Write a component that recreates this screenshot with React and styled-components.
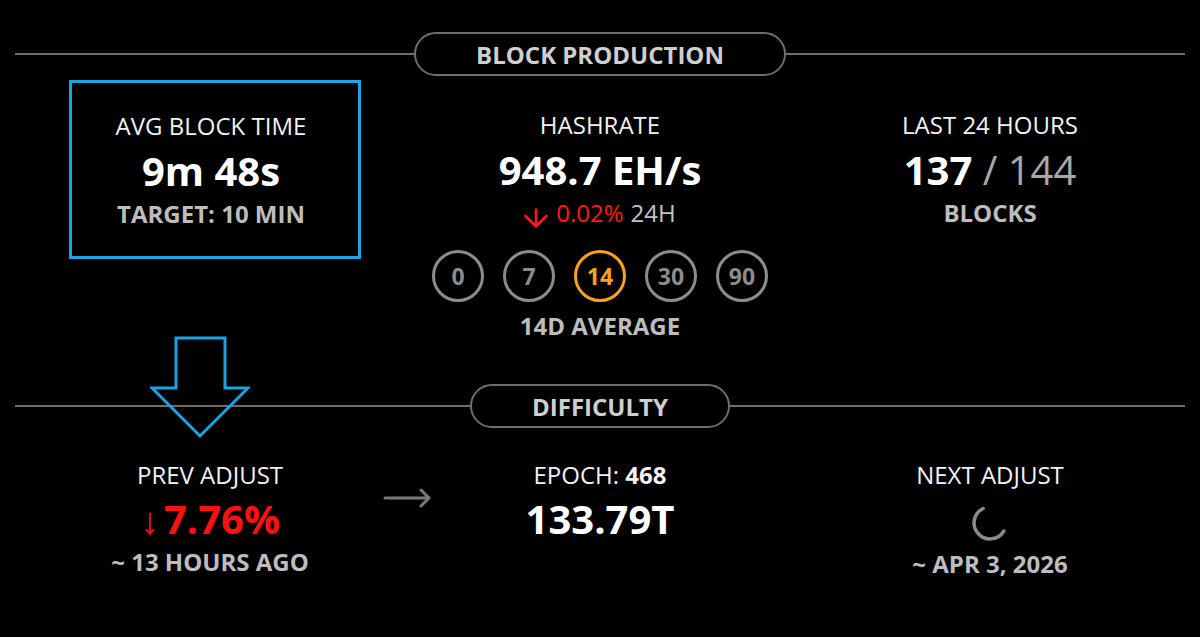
import React from 'react';
import styled, { createGlobalStyle } from 'styled-components';

const Global = createGlobalStyle`
  html, body {
    margin: 0;
    padding: 0;
    background: #000;
  }
  body {
    font-family: "Open Sans", "Noto Sans", sans-serif;
    color: #fff;
  }
`;

const Page = styled.div`
  position: relative;
  width: 1200px;
  height: 637px;
  box-sizing: border-box;
  padding: 32px 15px 0 15px;
  background: #000;
  overflow: hidden;
`;

const Header = styled.div`
  display: flex;
  align-items: center;
  height: 44px;
  margin-top: ${p => p.$top || 0}px;
`;

const Line = styled.div`
  flex: 1;
  height: 2px;
  background: #6e6e6e;
`;

const Pill = styled.div`
  height: 44px;
  box-sizing: border-box;
  display: flex;
  align-items: center;
  padding: 0 ${p => p.$pad}px;
  border: 2px solid #6e6e6e;
  border-radius: 22px;
  font-weight: 700;
  font-size: 24px;
  color: #cfcfcf;
`;

const Grid = styled.div`
  position: relative;
  display: grid;
  grid-template-columns: repeat(3, 1fr);
  align-items: start;
  margin-top: ${p => p.$top}px;
`;

const Col = styled.div`
  display: flex;
  flex-direction: column;
  align-items: center;
  padding-top: ${p => p.$pt || 0}px;
`;

const Highlight = styled.div`
  width: 292px;
  box-sizing: border-box;
  margin-left: 10px;
  padding: 28px 8px 29px 0;
  border: 3px solid #1aa3e6;
  display: flex;
  flex-direction: column;
  align-items: center;
`;

const Label = styled.div`
  font-size: 24px;
  line-height: 30px;
  font-weight: 400;
  color: #f2f2f2;
`;

const Value = styled.div`
  font-size: 40px;
  line-height: ${p => p.$lh || 60}px;
  height: ${p => p.$lh || 60}px;
  font-weight: 700;
  color: ${p => p.$red ? '#ff1010' : '#fff'};
  display: flex;
  align-items: center;
`;

const Sub = styled.div`
  font-size: 24px;
  line-height: ${p => p.$lh || 26}px;
  height: ${p => p.$lh || 26}px;
  font-weight: 700;
  color: #bdbdbd;
  display: flex;
  align-items: center;
  margin-top: ${p => p.$mt || 0}px;
`;

const Light = styled.span`
  font-weight: 400;
  color: ${p => p.$c || '#b0b0b0'};
`;

const Bold = styled.span`
  font-weight: 700;
`;

const Change = styled.div`
  font-size: 24px;
  line-height: 26px;
  height: 26px;
  display: flex;
  align-items: center;
  color: #c4c4c4;
`;

const DownIcon = styled.svg`
  position: relative;
  top: 5px;
  width: 24px;
  height: 20px;
  margin-right: 8px;
`;

const Red = styled.span`
  color: #ff1a1a;
  margin-right: 7px;
`;

const Periods = styled.div`
  display: flex;
  gap: 19px;
  margin-top: 24px;
`;

const Period = styled.div`
  width: 52px;
  height: 52px;
  box-sizing: border-box;
  border-radius: 50%;
  border: 3px solid ${p => p.$on ? '#f7a21c' : '#8c8c8c'};
  color: ${p => p.$on ? '#f7a21c' : '#8c8c8c'};
  display: flex;
  align-items: center;
  justify-content: center;
  font-weight: 700;
  font-size: 23px;
`;

const Thin = styled.span`
  font-weight: 400;
  font-size: 38px;
  margin-right: 5px;
`;

const Spin = styled.div`
  height: 58px;
  display: flex;
  align-items: center;
  justify-content: center;
  padding-top: 8px;
  box-sizing: border-box;
`;

const Connector = styled.svg`
  position: absolute;
  left: 368px;
  top: 28px;
  width: 50px;
  height: 20px;
`;

const Callout = styled.svg`
  position: absolute;
  left: 150px;
  top: 336px;
  width: 100px;
  height: 103px;
`;

const periods = [0, 7, 14, 30, 90];

export default function App() {
  return (
    <Page>
      <Global />
      <Header>
        <Line />
        <Pill $pad={60}>BLOCK PRODUCTION</Pill>
        <Line />
      </Header>

      <Grid $top={4}>
        <Col>
          <Highlight>
            <Label>AVG BLOCK TIME</Label>
            <Value>9m 48s</Value>
            <Sub>TARGET: 10 MIN</Sub>
          </Highlight>
        </Col>
        <Col $pt={30}>
          <Label>HASHRATE</Label>
          <Value>948.7 EH/s</Value>
          <Change>
            <DownIcon viewBox="0 0 24 20" fill="none" stroke="#ff1a1a" strokeWidth="2.6" strokeLinecap="round" strokeLinejoin="round">
              <path d="M12 1.5V18.5M1.5 8L12 18.5L22.5 8" />
            </DownIcon>
            <Red>0.02%</Red>
            24H
          </Change>
          <Periods>
            {periods.map(p => (
              <Period key={p} $on={p === 14}>{p}</Period>
            ))}
          </Periods>
          <Sub $mt={11}>14D AVERAGE</Sub>
        </Col>
        <Col $pt={30}>
          <Label>LAST 24 HOURS</Label>
          <Value>137<Light $c="#a8a8a8">&nbsp;/ 144</Light></Value>
          <Sub>BLOCKS</Sub>
        </Col>
      </Grid>

      <Header $top={45}>
        <Line />
        <Pill $pad={60}>DIFFICULTY</Pill>
        <Line />
      </Header>

      <Grid $top={32}>
        <Col>
          <Label>PREV ADJUST</Label>
          <Value $red $lh={58}><Thin>↓</Thin>7.76%</Value>
          <Sub $lh={28}>~ 13 HOURS AGO</Sub>
        </Col>
        <Col>
          <Label>EPOCH: <Bold>468</Bold></Label>
          <Value $lh={58}>133.79T</Value>
        </Col>
        <Col>
          <Label>NEXT ADJUST</Label>
          <Spin>
            <svg width="40" height="40" viewBox="0 0 40 40" fill="none">
              <path d="M33.9 28 A16 16 0 1 1 13.2 5.5" stroke="#8a8a8a" strokeWidth="3.5" strokeLinecap="round" />
            </svg>
          </Spin>
          <Sub $lh={32}>~ APR 3, 2026</Sub>
        </Col>
        <Connector viewBox="0 0 50 20" fill="none" stroke="#7a7a7a" strokeWidth="3" strokeLinecap="round" strokeLinejoin="round">
          <path d="M2 10H46M38 2L46 10L38 18" />
        </Connector>
      </Grid>

      <Callout viewBox="0 0 100 103" fill="none" stroke="#1aa3e6" strokeWidth="3" strokeLinejoin="miter">
        <path d="M26 2H75V52H98L50 100L2 52H26Z" />
      </Callout>
    </Page>
  );
}
